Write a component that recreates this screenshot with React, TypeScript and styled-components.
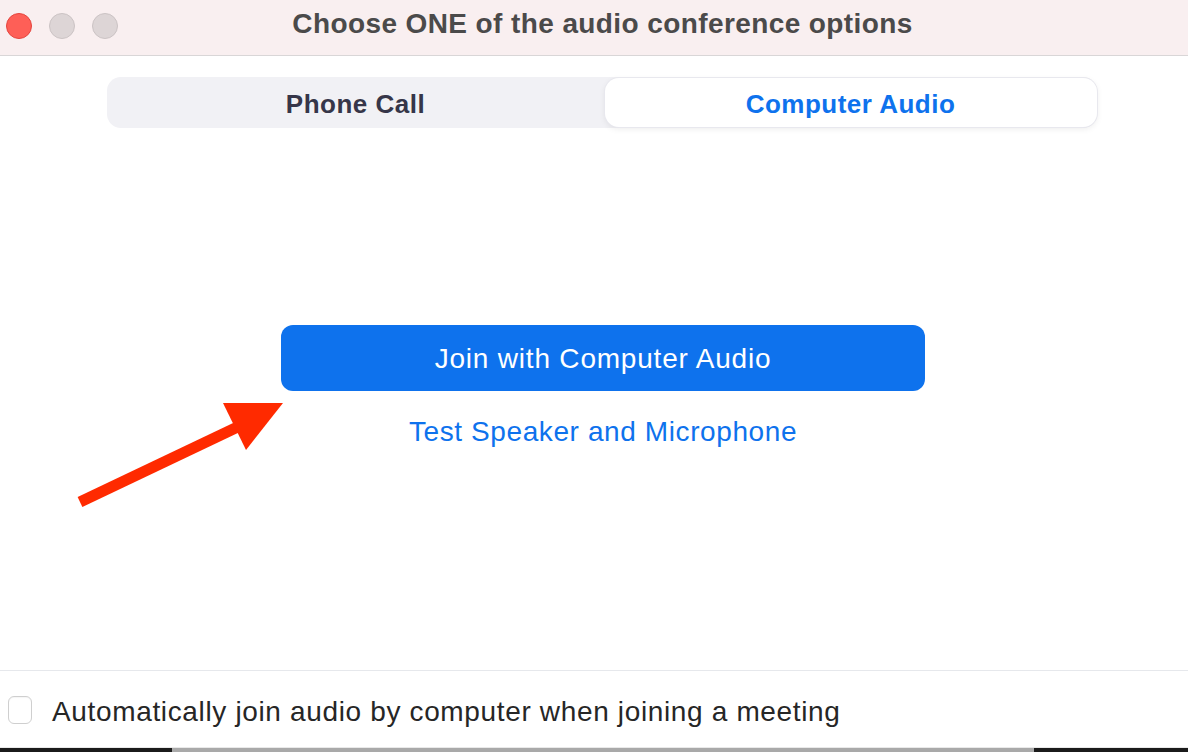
import React, { useState } from 'react';
import styled, { createGlobalStyle } from 'styled-components';

const GlobalStyle = createGlobalStyle`
  html, body {
    margin: 0;
    padding: 0;
    background: #ffffff;
  }
  body {
    font-family: "Liberation Sans", Arial, sans-serif;
  }
`;

const Window = styled.div`
  width: 1188px;
  height: 752px;
  display: flex;
  flex-direction: column;
  background: #ffffff;
  overflow: hidden;
`;

const TitleBar = styled.div`
  height: 55px;
  flex-shrink: 0;
  display: flex;
  align-items: center;
  background: #f9eff0;
  border-bottom: 1px solid #d9d6d7;
`;

const Lights = styled.div`
  display: flex;
  gap: 17px;
  padding-left: 6px;
  margin-top: -4px;
`;

const Light = styled.span<{ $color: string; $edge: string }>`
  width: 26px;
  height: 26px;
  border-radius: 50%;
  box-sizing: border-box;
  background: ${(p) => p.$color};
  border: 1px solid ${(p) => p.$edge};
`;

const Title = styled.div`
  flex: 1;
  text-align: center;
  margin-left: -101px;
  margin-top: -7px;
  font-size: 28px;
  font-weight: 700;
  letter-spacing: 0.4px;
  color: #4b4a4a;
`;

const Body = styled.div`
  flex: 1;
  position: relative;
  display: flex;
  flex-direction: column;
  align-items: center;
  padding-left: 18px;
`;

const Segmented = styled.div`
  margin-top: 21px;
  width: 990px;
  height: 51px;
  margin-left: -3px;
  display: grid;
  grid-template-columns: 498px 1fr;
  background: #f1f1f5;
  border-radius: 14px;
`;

const Segment = styled.div<{ $active?: boolean }>`
  display: flex;
  align-items: center;
  justify-content: center;
  padding-top: 4px;
  font-size: 26px;
  font-weight: 700;
  letter-spacing: 0.5px;
  border-radius: 14px;
  margin: ${(p) => (p.$active ? '1px 0' : '0')};
  color: ${(p) => (p.$active ? '#0e72ed' : '#363649')};
  background: ${(p) => (p.$active ? '#ffffff' : 'transparent')};
  box-shadow: ${(p) =>
    p.$active ? '0 0 0 1px #e8e8ee, 0 2px 6px rgba(0, 0, 0, 0.08)' : 'none'};
`;

const JoinButton = styled.button`
  margin-top: 197px;
  width: 644px;
  height: 66px;
  border: none;
  border-radius: 12px;
  background: #0e72ed;
  color: #ffffff;
  font-family: "Liberation Sans", Arial, sans-serif;
  font-size: 28px;
  letter-spacing: 0.8px;
  padding-bottom: 0;
  cursor: pointer;
`;

const TestLink = styled.div`
  margin-top: 25px;
  font-size: 28px;
  letter-spacing: 0.6px;
  color: #0e72ed;
`;

const Arrow = styled.svg`
  position: absolute;
  left: 70px;
  top: 284px;
`;

const Footer = styled.div`
  height: 76px;
  flex-shrink: 0;
  display: flex;
  align-items: center;
  gap: 20px;
  padding-left: 8px;
  border-top: 1px solid #e6e8ec;
`;

const Check = styled.span<{ $on: boolean }>`
  width: 24px;
  height: 28px;
  margin-top: 1px;
  box-sizing: border-box;
  border: 1px solid #cfcfcf;
  border-radius: 6px;
  background: ${(p) => (p.$on ? '#0e72ed' : '#ffffff')};
  box-shadow: inset 0 1px 1px rgba(0, 0, 0, 0.04);
  cursor: pointer;
`;

const Label = styled.span`
  font-size: 28px;
  letter-spacing: 0.65px;
  color: #262626;
  margin-top: 6px;
`;

const BottomEdge = styled.div`
  height: 4px;
  flex-shrink: 0;
  display: grid;
  grid-template-columns: 172px 1fr 154px;
  border-top: 1px solid #e9e9e9;
`;

const EdgePart = styled.span<{ $dark?: boolean }>`
  background: ${(p) => (p.$dark ? '#1b1b1b' : '#a9a9a9')};
`;

export default function App() {
  const [auto, setAuto] = useState(false);

  return (
    <>
      <GlobalStyle />
      <Window>
        <TitleBar>
          <Lights>
            <Light $color="#fe5f57" $edge="#e5443d" />
            <Light $color="#ddd5d6" $edge="#cbc3c4" />
            <Light $color="#ddd5d6" $edge="#cbc3c4" />
          </Lights>
          <Title>Choose ONE of the audio conference options</Title>
        </TitleBar>

        <Body>
          <Segmented>
            <Segment>Phone Call</Segment>
            <Segment $active>Computer Audio</Segment>
          </Segmented>

          <JoinButton>Join with Computer Audio</JoinButton>
          <TestLink>Test Speaker and Microphone</TestLink>

          <Arrow width="220" height="170" viewBox="70 340 220 170">
            <line x1="80" y1="502" x2="246" y2="423" stroke="#ff2a00" strokeWidth="11" />
            <polygon points="223,403 283,403 246,450" fill="#ff2a00" />
          </Arrow>
        </Body>

        <Footer>
          <Check $on={auto} onClick={() => setAuto(!auto)} />
          <Label>Automatically join audio by computer when joining a meeting</Label>
        </Footer>

        <BottomEdge>
          <EdgePart $dark />
          <EdgePart />
          <EdgePart $dark />
        </BottomEdge>
      </Window>
    </>
  );
}
